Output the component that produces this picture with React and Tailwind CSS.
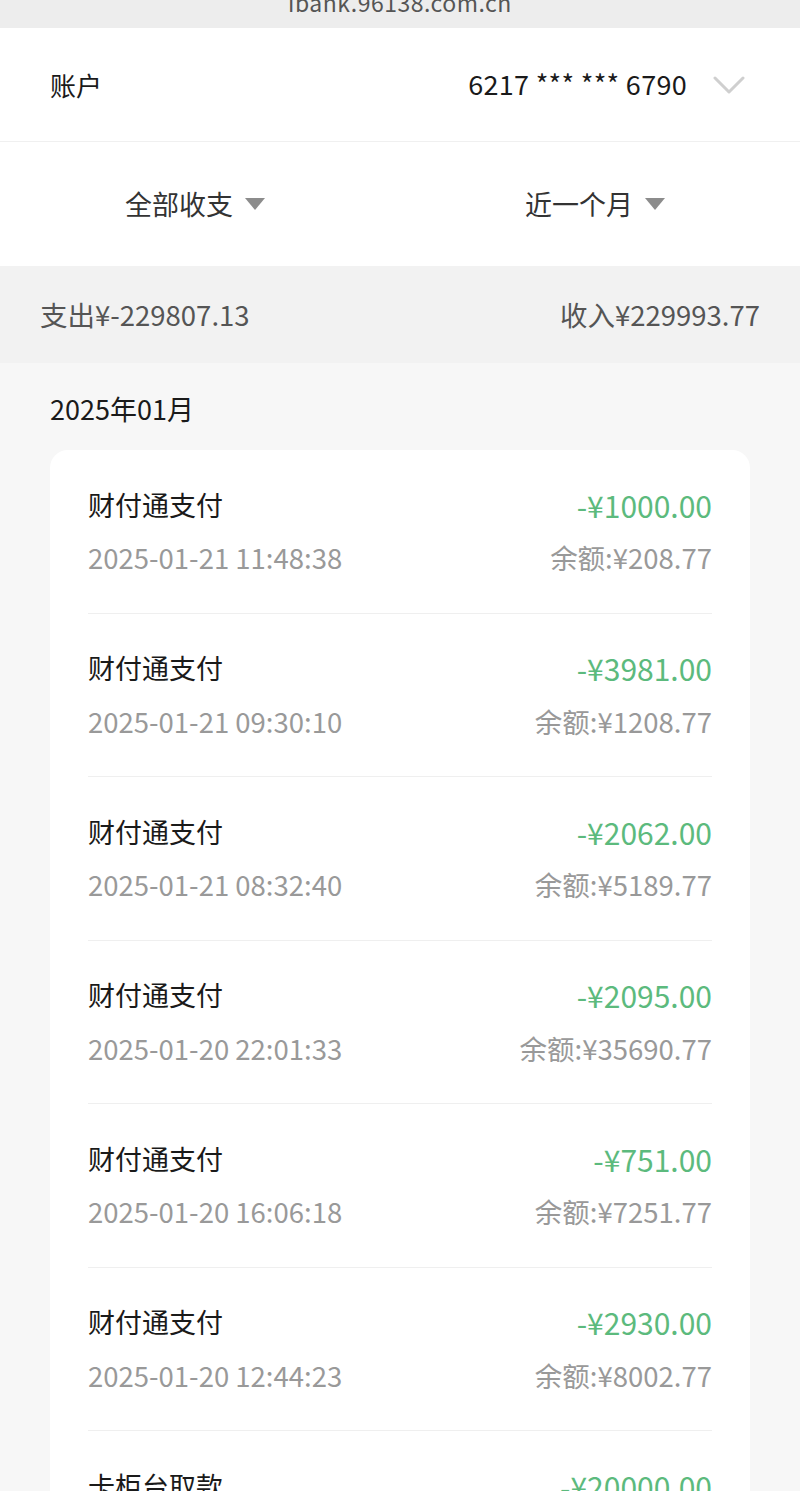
const rows = [
  { title: "财付通支付", amount: "-¥1000.00", time: "2025-01-21 11:48:38", balance: "余额:¥208.77" },
  { title: "财付通支付", amount: "-¥3981.00", time: "2025-01-21 09:30:10", balance: "余额:¥1208.77" },
  { title: "财付通支付", amount: "-¥2062.00", time: "2025-01-21 08:32:40", balance: "余额:¥5189.77" },
  { title: "财付通支付", amount: "-¥2095.00", time: "2025-01-20 22:01:33", balance: "余额:¥35690.77" },
  { title: "财付通支付", amount: "-¥751.00", time: "2025-01-20 16:06:18", balance: "余额:¥7251.77" },
  { title: "财付通支付", amount: "-¥2930.00", time: "2025-01-20 12:44:23", balance: "余额:¥8002.77" },
  { title: "卡柜台取款", amount: "-¥20000.00", time: "2025-01-20 10:15:02", balance: "余额:¥10932.77" },
]

function Caret() {
  return (
    <svg width="20" height="12" viewBox="0 0 20 12" className="ml-[12px]">
      <path d="M0 0 H20 L10 12 Z" fill="#8c8c8c" />
    </svg>
  )
}

export default function App() {
  return (
    <div
      className="w-[800px] h-[1491px] overflow-hidden bg-[#f7f7f7]"
      style={{ fontFamily: '"Noto Sans CJK SC", "Noto Sans", sans-serif' }}
    >
      {/* URL bar */}
      <div className="h-[28px] bg-[#ededed] flex justify-center items-start overflow-hidden">
        <span className="text-[23px] leading-[23px] text-[#555] -mt-[9px] tracking-[0.5px]">ibank.96138.com.cn</span>
      </div>

      {/* Account */}
      <div className="h-[114px] bg-white flex items-center justify-between pl-[50px] pr-[55px] border-b border-[#f0f0f0]">
        <span className="text-[26px] text-[#1a1a1a]">账户</span>
        <div className="flex items-center">
          <span className="text-[27px] text-[#1a1a1a] tracking-[0.3px]">6217 *** *** 6790</span>
          <svg width="32" height="20" viewBox="0 0 32 20" className="ml-[26px]">
            <path d="M2 3 L16 17 L30 3" fill="none" stroke="#cfcfcf" strokeWidth="3" strokeLinecap="round" strokeLinejoin="round" />
          </svg>
        </div>
      </div>

      {/* Filters */}
      <div className="h-[124px] bg-white grid grid-cols-2">
        <div className="flex items-center justify-center pr-[10px]">
          <span className="text-[27px] text-[#333]">全部收支</span>
          <Caret />
        </div>
        <div className="flex items-center justify-center pr-[10px]">
          <span className="text-[27px] text-[#333]">近一个月</span>
          <Caret />
        </div>
      </div>

      {/* Summary */}
      <div className="h-[97px] bg-[#f2f2f2] flex items-center justify-between px-[40px] text-[27.5px] text-[#555]">
        <span>支出¥-229807.13</span>
        <span>收入¥229993.77</span>
      </div>

      {/* Month */}
      <div className="px-[50px]">
        <div className="h-[87px] flex items-center text-[27px] text-[#1a1a1a] pt-[6px]">2025年01月</div>

        <div className="bg-white rounded-[18px] px-[38px]">
          {rows.map((r, i) => (
            <div key={i} className="pt-[35px] pb-[34.5px] border-b border-[#efefef] last:border-0">
              <div className="flex items-center justify-between h-[40px]">
                <span className="text-[27px] text-[#1a1a1a]">{r.title}</span>
                <span className="text-[30px] text-[#5cba7d]">{r.amount}</span>
              </div>
              <div className="flex items-center justify-between h-[40px] mt-[13px]">
                <span className="text-[27.5px] text-[#999]">{r.time}</span>
                <span className="text-[27.5px] text-[#999]">{r.balance}</span>
              </div>
            </div>
          ))}
        </div>
      </div>
    </div>
  )
}
